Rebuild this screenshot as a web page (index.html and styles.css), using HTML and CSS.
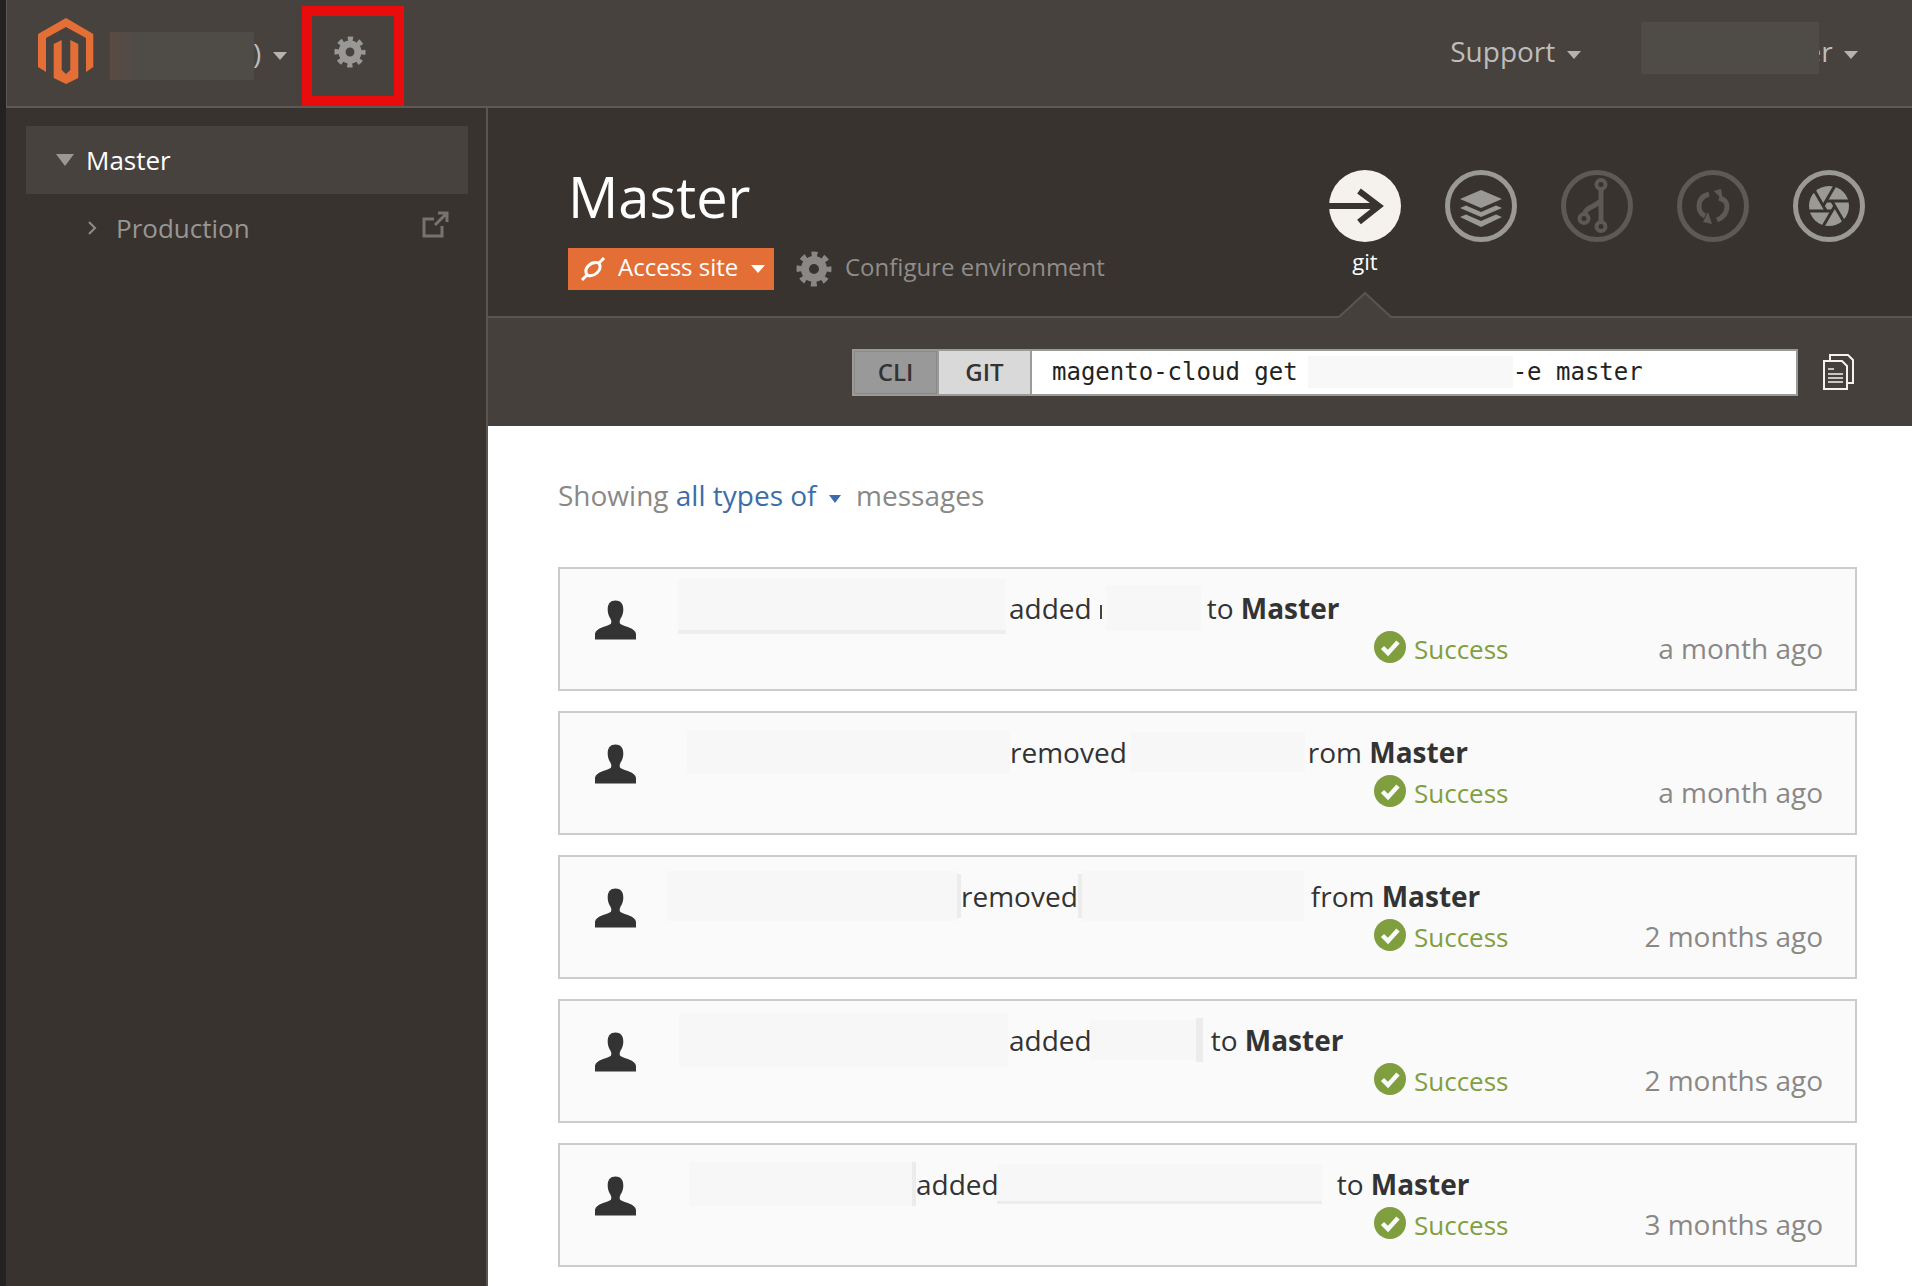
FILE: index.html
```html
<!DOCTYPE html>
<html lang="en">
  <head>
    <meta charset="UTF-8" />
    <title>Master</title>
    <link rel="stylesheet" href="styles.css">
  </head>
  <body>
    <svg class="defs" width="0" height="0">
      <symbol id="gear" viewBox="0 0 36 36">
        <circle cx="18" cy="18" r="9" fill="none" stroke="currentColor" stroke-width="8" />
        <circle cx="18" cy="18" r="14.5" fill="none" stroke="currentColor" stroke-width="6" stroke-dasharray="5.7 5.69" stroke-dashoffset="2.85" />
      </symbol>
      <symbol id="person" viewBox="0 0 42 40">
        <path d="M21 0C16 0 13 3 13 9C13 13 14 16 16 19C17 21 17 23 16 24C11 27 1 28 0 34V40H42V34C41 28 31 27 26 24C25 23 25 21 26 19C28 16 29 13 29 9C29 3 26 0 21 0Z" />
      </symbol>
      <symbol id="check" viewBox="0 0 32 32">
        <circle cx="16" cy="16" r="16" fill="#7f9f3f" />
        <path d="M8.5 16.5L14 22L24 11" fill="none" stroke="#fafafa" stroke-width="4.5" />
      </symbol>
    </svg>

    <div class="shell">
      <header class="topbar">
        <svg class="logo" width="56" height="66" viewBox="0 0 56 66">
          <path fill="#e46f36" d="M28 0L55.3 16V49L48 54V20L28 9L8 20V54L0 49V16ZM15.7 26L23.7 22V52L28 56L32.3 52V22L40.3 26V60L28 66L15.7 60Z" />
        </svg>
        <div class="project">
          <span class="smudge smudge-project"></span>
          <span class="project-tail">)</span>
          <span class="caret"></span>
        </div>
        <div class="gear-box">
          <svg class="gear-top" width="32" height="32"><use href="#gear" /></svg>
        </div>
        <nav class="topnav">
          <a class="nav-link">Support <span class="caret"></span></a>
          <div class="nav-user">
            <span class="smudge smudge-user"></span>
            <span class="nav-link nav-name">er <span class="caret"></span></span>
          </div>
        </nav>
      </header>

      <div class="body-wrap">
        <aside class="sidebar">
          <div class="env env-active">
            <span class="caret caret-big"></span>
            <span>Master</span>
          </div>
          <div class="env env-child">
            <svg class="chev" width="10" height="16" viewBox="0 0 10 16"><path d="M2 2L8 8L2 14" fill="none" stroke="#8f8d8b" stroke-width="2" /></svg>
            <span>Production</span>
            <svg class="ext" width="28" height="28" viewBox="0 0 28 28">
              <path d="M21 15V25H3V8H13M14 14L25 3M17 2H26V11" fill="none" stroke="#77736f" stroke-width="3" />
            </svg>
          </div>
        </aside>

        <main class="main">
          <section class="head">
            <div class="head-left">
              <h1>Master</h1>
              <div class="actions">
                <a class="access">
                  <svg width="26" height="26" viewBox="0 0 26 26">
                    <path d="M2 24L7 19M19 7L24 2M7 19C3 12 11 5 19 7C23 14 14 22 7 19Z" fill="none" stroke="#fff" stroke-width="3" />
                  </svg>
                  <span class="lift">Access site</span>
                  <span class="caret caret-white"></span>
                </a>
                <a class="configure">
                  <svg class="gear-conf" width="36" height="36"><use href="#gear" /></svg>
                  <span class="lift">Configure environment</span>
                </a>
              </div>
            </div>
            <div class="steps">
              <div class="step">
                <svg class="step-icon" viewBox="0 0 72 72">
                  <circle cx="36" cy="36" r="36" fill="#f5f2ed" />
                  <path d="M0 36H49M30 21L50 36L30 52" fill="none" stroke="#38332f" stroke-width="6" />
                </svg>
                <span class="step-label">git</span>
                <svg class="notch" width="54" height="26" viewBox="0 0 54 26">
                  <path d="M1 26L27 1L53 26Z" fill="#45403b" />
                  <path d="M1 25L27 1L53 25" fill="none" stroke="#5a5550" stroke-width="2" />
                </svg>
              </div>
              <div class="step">
                <svg class="step-icon" viewBox="0 0 72 72">
                  <circle cx="36" cy="36" r="33.5" fill="none" stroke="#9a9996" stroke-width="5" />
                  <path fill="#9a9996" d="M15 29L36 20L57 29L36 38ZM15 38L21 35.500L36 42L51 35.500L57 38L36 47ZM15 47L21 44.500L36 51L51 44.500L57 47L36 57Z" />
                </svg>
              </div>
              <div class="step">
                <svg class="step-icon" viewBox="0 0 72 72">
                  <circle cx="36" cy="36" r="33.5" fill="none" stroke="#5d5955" stroke-width="5" />
                  <path fill="none" stroke="#5d5955" stroke-width="5" d="M40 19V52M40 30C36 37 25 36 23.500 44" />
                  <g fill="none" stroke="#5d5955" stroke-width="4">
                    <circle cx="40" cy="14.500" r="4.500" />
                    <circle cx="40" cy="56.500" r="4.500" />
                    <circle cx="23" cy="48.500" r="4.500" />
                  </g>
                </svg>
              </div>
              <div class="step">
                <svg class="step-icon" viewBox="0 0 72 72">
                  <circle cx="36" cy="36" r="33.5" fill="none" stroke="#5d5955" stroke-width="5" />
                  <g fill="none" stroke="#5d5955" stroke-width="5">
                    <path d="M32 24Q22 27 22 36Q22 43 28 46" />
                    <path d="M42 28Q50 30 50 36Q50 46 40 50" />
                  </g>
                  <path fill="#5d5955" d="M36.700 21L44 19L46 30ZM26 52L35 54L31 42Z" />
                </svg>
              </div>
              <div class="step">
                <svg class="step-icon" viewBox="0 0 72 72">
                  <circle cx="36" cy="36" r="33.500" fill="none" stroke="#9a9996" stroke-width="5" />
                  <circle cx="36" cy="36" r="20" fill="#9a9996" />
                  <g transform="translate(36 36)" stroke="#38332f" stroke-width="3">
                    <path d="M-3 -5H21" />
                    <path d="M-3 -5H21" transform="rotate(60)" />
                    <path d="M-3 -5H21" transform="rotate(120)" />
                    <path d="M-3 -5H21" transform="rotate(180)" />
                    <path d="M-3 -5H21" transform="rotate(240)" />
                    <path d="M-3 -5H21" transform="rotate(300)" />
                  </g>
                </svg>
              </div>
            </div>
          </section>

          <section class="cmdbar">
            <div class="cmd">
              <span class="cmd-tab cmd-cli">CLI</span>
              <span class="cmd-tab cmd-git">GIT</span>
              <div class="cmd-text">
                <span>magento-cloud get</span>
                <span class="cmd-smudge"></span>
                <span>-e master</span>
              </div>
            </div>
            <svg class="copy" width="32" height="36" viewBox="0 0 32 36">
              <g fill="none" stroke="#f5f2ed" stroke-width="2">
                <path d="M2 7H20L25 12V35H2ZM8 7V1H26L31 6V29H25" />
                <path d="M6 15H12M6 20H21M6 24H21M6 28H21" stroke-width="1.5" />
              </g>
            </svg>
          </section>

          <section class="content">
            <p class="filter">
              Showing <a class="filter-link">all types of</a>
              <span class="caret caret-blue"></span>
              messages
            </p>

            <div class="msg-row">
              <svg class="person"><use href="#person" /></svg>
              <div class="msg-body">
                <div class="msg-line line-1">
                  <span class="blot blot-1a"></span>
                  <span class="verb">added</span>
                  <i class="tick"></i>
                  <span class="blot blot-1b"></span>
                  <span class="tail">to <b>Master</b></span>
                </div>
                <div class="msg-meta">
                  <span class="status"><svg width="32" height="32"><use href="#check" /></svg>Success</span>
                  <span class="when">a month ago</span>
                </div>
              </div>
            </div>

            <div class="msg-row">
              <svg class="person"><use href="#person" /></svg>
              <div class="msg-body">
                <div class="msg-line line-2">
                  <span class="blot blot-2a"></span>
                  <span class="verb">removed</span>
                  <span class="blot blot-2b"></span>
                  <span class="tail">rom <b>Master</b></span>
                </div>
                <div class="msg-meta">
                  <span class="status"><svg width="32" height="32"><use href="#check" /></svg>Success</span>
                  <span class="when">a month ago</span>
                </div>
              </div>
            </div>

            <div class="msg-row">
              <svg class="person"><use href="#person" /></svg>
              <div class="msg-body">
                <div class="msg-line line-3">
                  <span class="blot blot-3a"></span>
                  <span class="sliver"></span>
                  <span class="verb">removed</span>
                  <span class="sliver"></span>
                  <span class="blot blot-3b"></span>
                  <span class="tail">from <b>Master</b></span>
                </div>
                <div class="msg-meta">
                  <span class="status"><svg width="32" height="32"><use href="#check" /></svg>Success</span>
                  <span class="when">2 months ago</span>
                </div>
              </div>
            </div>

            <div class="msg-row">
              <svg class="person"><use href="#person" /></svg>
              <div class="msg-body">
                <div class="msg-line line-4">
                  <span class="blot blot-4a"></span>
                  <span class="verb">added</span>
                  <span class="blot blot-4b"></span>
                  <span class="sliver sliver-wide"></span>
                  <span class="tail">to <b>Master</b></span>
                </div>
                <div class="msg-meta">
                  <span class="status"><svg width="32" height="32"><use href="#check" /></svg>Success</span>
                  <span class="when">2 months ago</span>
                </div>
              </div>
            </div>

            <div class="msg-row">
              <svg class="person"><use href="#person" /></svg>
              <div class="msg-body">
                <div class="msg-line line-5">
                  <span class="blot blot-5a"></span>
                  <span class="sliver"></span>
                  <span class="verb">added</span>
                  <span class="blot blot-5b"></span>
                  <span class="tail">to <b>Master</b></span>
                </div>
                <div class="msg-meta">
                  <span class="status"><svg width="32" height="32"><use href="#check" /></svg>Success</span>
                  <span class="when">3 months ago</span>
                </div>
              </div>
            </div>
          </section>
        </main>
      </div>
    </div>
  </body>
</html>
```

FILE: styles.css
```css
html, body {
  margin: 0;
  padding: 0;
  height: 100%;
  overflow: hidden;
}
body {
  font-family: "Open Sans", "Noto Sans", sans-serif;
  background: #fff;
  color: #333;
}
.defs {
  position: absolute;
}
.shell {
  height: 1286px;
  border-left: 6px solid #232121;
  display: flex;
  flex-direction: column;
  box-sizing: border-box;
}

/* carets */
.caret {
  display: inline-block;
  width: 0;
  height: 0;
  border-left: 7px solid transparent;
  border-right: 7px solid transparent;
  border-top: 8px solid #b5b3b1;
  vertical-align: middle;
}
.caret-big {
  border-left-width: 9px;
  border-right-width: 9px;
  border-top: 12px solid #9a9896;
}
.caret-white {
  border-top-color: #fff;
  margin-left: 3px;
}
.caret-blue {
  border-left-width: 6px;
  border-right-width: 6px;
  border-top-color: #3d6da8;
  margin: 0 8px 0 5px;
}

/* top bar */
.topbar {
  height: 108px;
  box-sizing: border-box;
  background: #47423e;
  border-left: 1px solid #5e5955;
  border-bottom: 2px solid #5e5955;
  display: flex;
  align-items: flex-start;
  flex: none;
}
.logo {
  margin: 18px 0 0 31px;
}
.smudge {
  display: block;
  background: #4f4b47;
  position: relative;
  z-index: 1;
  flex: none;
}
.project {
  display: flex;
  align-items: center;
  margin: 32px 0 0 16px;
  height: 48px;
}
.smudge-project {
  width: 144px;
  height: 48px;
  background: linear-gradient(90deg, #5a4b43, #4f4b47 20%, #4f4b47);
}
.project-tail {
  color: #bdbdbb;
  font-size: 28px;
  width: 12px;
  margin-left: -1px;
  margin-right: 8px;
  padding-bottom: 6px;
}
.gear-box {
  width: 102px;
  height: 100px;
  box-sizing: border-box;
  border: 10px solid #e80c0c;
  margin: 6px 0 0 15px;
  display: flex;
  justify-content: center;
  padding: 20px 7px 0 0;
}
.gear-top {
  color: #999896;
}
.topnav {
  margin-left: auto;
  padding-right: 54px;
  display: flex;
  align-items: center;
  height: 102px;
  gap: 60px;
}
.nav-link {
  color: #bdbdbb;
  font-size: 28px;
}
.nav-link .caret {
  margin-left: 4px;
}
.nav-name {
  margin-left: -13px;
}
.nav-user {
  display: flex;
  align-items: center;
}
.smudge-user {
  width: 178px;
  height: 52px;
  margin-bottom: 6px;
}

.body-wrap {
  flex: 1;
  display: flex;
  min-height: 0;
}

/* sidebar */
.sidebar {
  width: 480px;
  flex: none;
  background: #38332f;
  border-right: 2px solid #5a5550;
  padding-top: 18px;
}
.env {
  display: flex;
  align-items: center;
  height: 68px;
  font-size: 26px;
}
.env-active {
  background: #47423e;
  margin: 0 18px 0 20px;
  color: #fff;
  padding-left: 30px;
  gap: 12px;
}
.env-child {
  color: #989694;
  margin: 0 18px 0 20px;
  padding-left: 61px;
  gap: 19px;
}
.ext {
  margin-left: auto;
  margin-right: 19px;
  margin-bottom: 6px;
}

/* main column */
.main {
  flex: 1;
  min-width: 0;
  display: flex;
  flex-direction: column;
}
.head {
  height: 210px;
  box-sizing: border-box;
  background: #38332f;
  border-bottom: 2px solid #5a5550;
  display: flex;
  justify-content: space-between;
  padding: 0 47px 0 80px;
  flex: none;
}
.head-left {
  padding-top: 50px;
}
h1 {
  margin: 0;
  font-size: 56px;
  font-weight: 400;
  line-height: 76px;
  color: #fff;
}
.actions {
  display: flex;
  align-items: center;
  margin-top: 14px;
}
.lift {
  padding-bottom: 6px;
}
.access {
  height: 42px;
  width: 206px;
  box-sizing: border-box;
  background: #e46f36;
  color: #fff;
  font-size: 24px;
  display: flex;
  align-items: center;
  gap: 10px;
  padding-left: 12px;
}
.access svg {
  margin-right: 2px;
}
.configure {
  display: flex;
  align-items: center;
  gap: 13px;
  color: #8f8d8b;
  font-size: 24px;
  margin-left: 22px;
}
.gear-conf {
  color: #8a8886;
}
.steps {
  display: flex;
  gap: 44px;
  padding-top: 62px;
}
.step {
  width: 72px;
  position: relative;
  display: flex;
  flex-direction: column;
  align-items: center;
}
.step-icon {
  width: 72px;
  height: 72px;
}
.step-label {
  color: #fff;
  font-size: 22px;
  line-height: 30px;
  margin-top: 4px;
}
.notch {
  position: absolute;
  left: 9px;
  top: 122px;
}

/* command bar */
.cmdbar {
  height: 108px;
  background: #45403b;
  display: flex;
  align-items: center;
  padding-left: 364px;
  flex: none;
}
.cmd {
  display: flex;
  height: 47px;
  width: 946px;
  box-sizing: border-box;
  border: 2px solid #9a9a98;
  background: #9a9a98;
  gap: 2px;
}
.cmd-tab {
  display: flex;
  align-items: center;
  justify-content: center;
  font-size: 24px;
  font-weight: 600;
  color: #333;
  padding-bottom: 2px;
  box-sizing: border-box;
}
.cmd-cli {
  width: 83px;
  background: #999;
  box-shadow: inset 0 0 0 1px #8a8a88;
}
.cmd-git {
  width: 91px;
  background: #d9d9d9;
}
.cmd-text {
  flex: 1;
  background: #fff;
  display: flex;
  align-items: center;
  padding-left: 20px;
  font-family: "DejaVu Sans Mono", "Liberation Mono", monospace;
  font-size: 24px;
  color: #222;
}
.cmd-smudge {
  width: 205px;
  height: 32px;
  background: #f8f8f8;
  margin-left: 10px;
}
.copy {
  margin-left: 24px;
}

/* message list */
.content {
  flex: 1;
  background: #fff;
  padding: 0 55px 0 70px;
}
.filter {
  margin: 0;
  height: 141px;
  box-sizing: border-box;
  padding-top: 49px;
  font-size: 28px;
  line-height: 40px;
  color: #8a8886;
}
.filter-link {
  color: #3d6da8;
}
.msg-row {
  height: 124px;
  box-sizing: border-box;
  background: #fafafa;
  border: 2px solid #cbcbcb;
  margin-bottom: 20px;
  display: flex;
  padding: 21px 0 0 35px;
}
.person {
  width: 41px;
  height: 40px;
  margin: 10px 24px 0 0;
  fill: #333;
  flex: none;
}
.msg-body {
  flex: 1;
  min-width: 0;
}
.msg-line {
  display: flex;
  align-items: center;
  height: 36px;
  font-size: 28px;
  color: #333;
  white-space: pre;
}
.msg-meta {
  display: flex;
  justify-content: flex-end;
  align-items: center;
  margin-top: 5px;
  height: 36px;
  padding-right: 32px;
  font-size: 26px;
}
.status {
  display: flex;
  align-items: center;
  gap: 8px;
  color: #7f9f3f;
  width: 149px;
}
.status svg {
  margin-bottom: 4px;
}
.when {
  color: #8a8886;
  font-size: 28px;
  width: 300px;
  text-align: right;
  padding-bottom: 2px;
}
.blot {
  flex: none;
  background: #f7f7f7;
}
.sliver {
  flex: none;
  width: 4px;
  height: 44px;
  background: #ececec;
}
.sliver-wide {
  width: 7px;
  margin-right: 8px;
}
.tick {
  flex: none;
  width: 2px;
  height: 14px;
  background: #444;
  margin: 8px 4px 0 8px;
}
.blot-1a { width: 328px; height: 55px; margin-left: 18px; margin-right: 3px; box-sizing: border-box; border-bottom: 4px solid #eeeeee; margin-bottom: 3px; }
.blot-1b { width: 95px; height: 46px; margin-right: 6px; }
.blot-2a { width: 323px; height: 44px; margin-left: 27px; }
.blot-2b { width: 175px; height: 40px; margin-left: 3px; margin-right: 3px; }
.blot-3a { width: 290px; height: 50px; margin-left: 7px; }
.blot-3b { width: 222px; height: 50px; margin-right: 7px; }
.blot-4a { width: 329px; height: 54px; margin-left: 19px; margin-right: 1px; }
.blot-4b { width: 106px; height: 40px; margin-left: -2px; }
.blot-5a { width: 223px; height: 44px; margin-left: 29px; }
.blot-5b { width: 325px; height: 40px; box-sizing: border-box; border-bottom: 3px solid #ececec; margin: 0 15px 0 -2px; }
```
